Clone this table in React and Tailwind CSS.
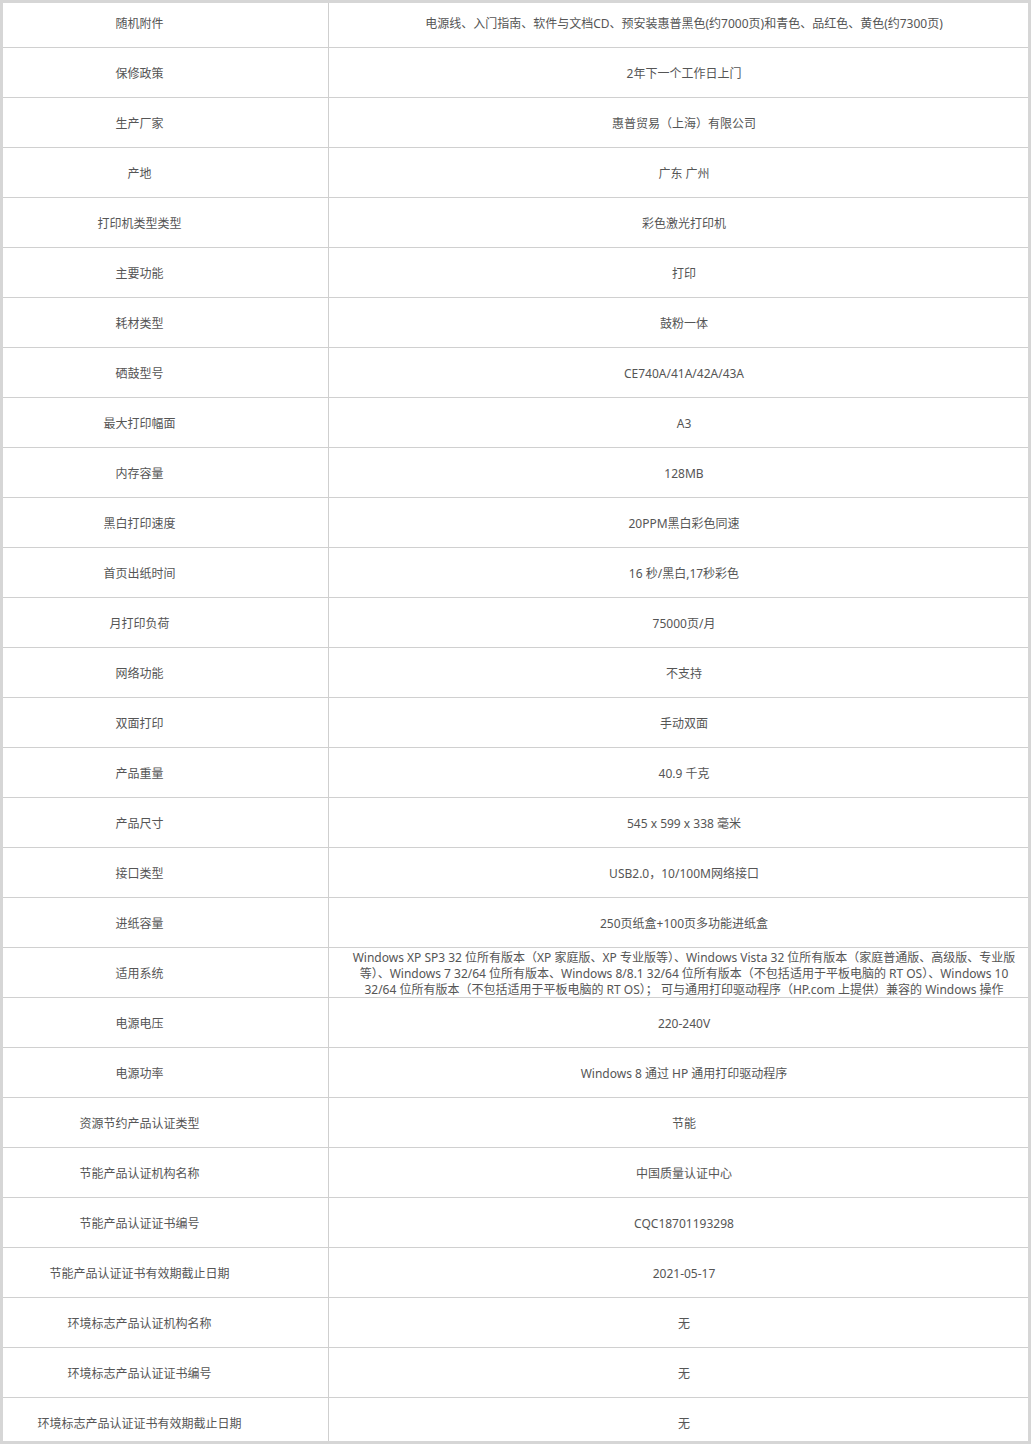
const rows = [
  ['随机附件', '电源线、入门指南、软件与文档CD、预安装惠普黑色(约7000页)和青色、品红色、黄色(约7300页)'],
  ['保修政策', '2年下一个工作日上门'],
  ['生产厂家', '惠普贸易（上海）有限公司'],
  ['产地', '广东 广州'],
  ['打印机类型类型', '彩色激光打印机'],
  ['主要功能', '打印'],
  ['耗材类型', '鼓粉一体'],
  ['硒鼓型号', 'CE740A/41A/42A/43A'],
  ['最大打印幅面', 'A3'],
  ['内存容量', '128MB'],
  ['黑白打印速度', '20PPM黑白彩色同速'],
  ['首页出纸时间', '16 秒/黑白,17秒彩色'],
  ['月打印负荷', '75000页/月'],
  ['网络功能', '不支持'],
  ['双面打印', '手动双面'],
  ['产品重量', '40.9 千克'],
  ['产品尺寸', '545 x 599 x 338 毫米'],
  ['接口类型', 'USB2.0，10/100M网络接口'],
  ['进纸容量', '250页纸盒+100页多功能进纸盒'],
  ['适用系统', [
    'Windows XP SP3 32 位所有版本（XP 家庭版、XP 专业版等）、Windows Vista 32 位所有版本（家庭普通版、高级版、专业版',
    '等）、Windows 7 32/64 位所有版本、Windows 8/8.1 32/64 位所有版本（不包括适用于平板电脑的 RT OS）、Windows 10',
    '32/64 位所有版本（不包括适用于平板电脑的 RT OS）； 可与通用打印驱动程序（HP.com 上提供）兼容的 Windows 操作',
  ]],
  ['电源电压', '220-240V'],
  ['电源功率', 'Windows 8 通过 HP 通用打印驱动程序'],
  ['资源节约产品认证类型', '节能'],
  ['节能产品认证机构名称', '中国质量认证中心'],
  ['节能产品认证证书编号', 'CQC18701193298'],
  ['节能产品认证证书有效期截止日期', '2021-05-17'],
  ['环境标志产品认证机构名称', '无'],
  ['环境标志产品认证证书编号', '无'],
  ['环境标志产品认证证书有效期截止日期', '无'],
]

function Value({ value }) {
  if (Array.isArray(value)) {
    return (
      <div className="leading-4">
        {value.map((line, i) => (
          <div key={i} className="whitespace-nowrap">{line}</div>
        ))}
      </div>
    )
  }
  return <span className="whitespace-nowrap">{value}</span>
}

export default function App() {
  return (
    <div
      className="w-[1031px] h-[1444px] overflow-hidden border-[3px] border-[#d6d6d6] bg-white text-[12px] text-[#555]"
      style={{ fontFamily: '"Noto Sans", "Noto Sans CJK SC", sans-serif' }}
    >
      <div className="-mt-[5px]">
        {rows.map(([label, value]) => (
          <div key={label} className="grid grid-cols-[326px_1fr] h-[50px] border-b border-[#d0d0d0]">
            <div className="flex items-center justify-center pt-[2px] pr-[52px] border-r border-[#cfcfcf]">
              <span className="whitespace-nowrap">{label}</span>
            </div>
            <div className="flex items-center justify-center pt-[2px] pl-[11px] text-center">
              <Value value={value} />
            </div>
          </div>
        ))}
      </div>
    </div>
  )
}
